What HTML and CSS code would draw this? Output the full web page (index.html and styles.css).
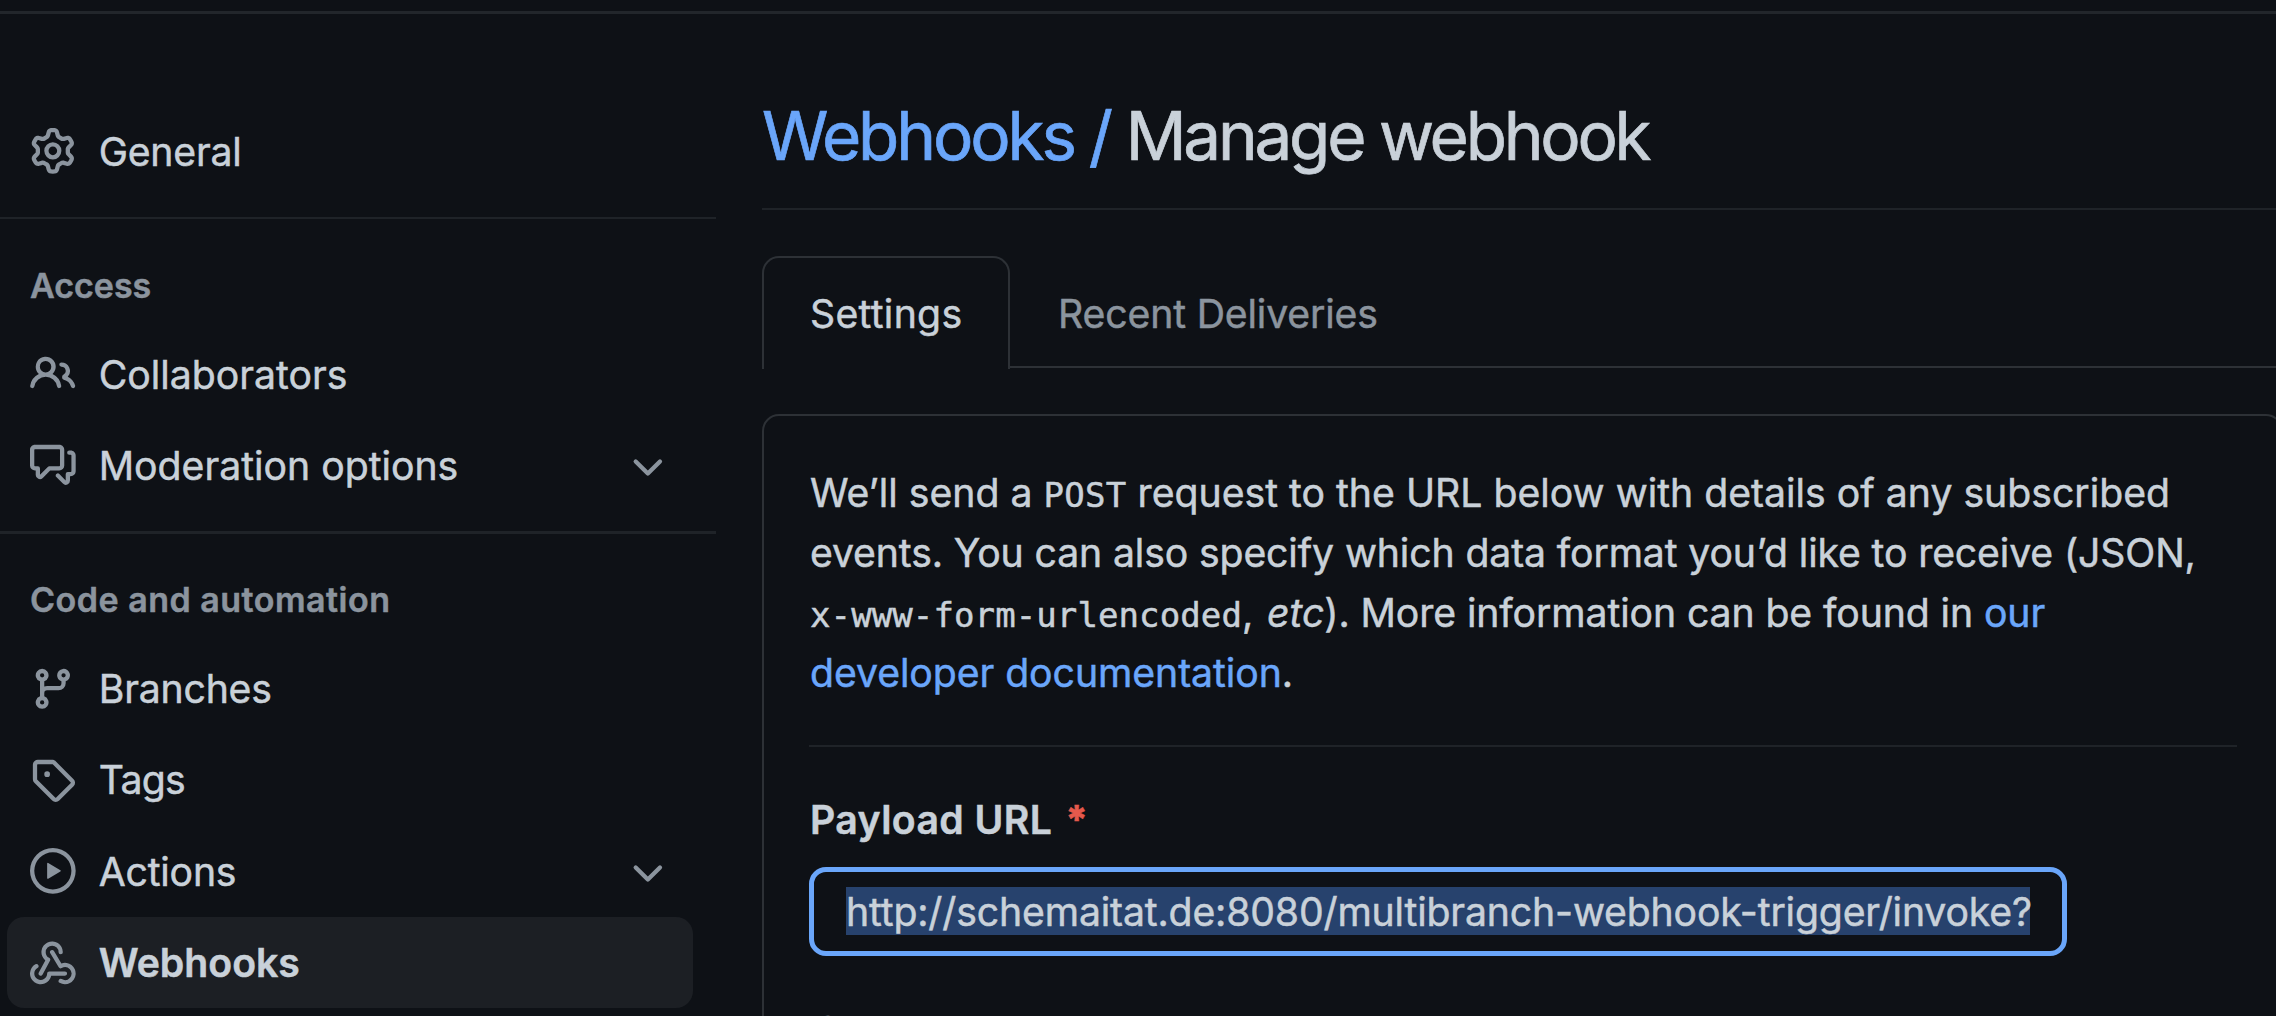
FILE: index.html
```html
<!DOCTYPE html>
<html lang="en">
<head>
<meta charset="utf-8">
<title>Manage webhook</title>
<link rel="stylesheet" href="styles.css">
</head>
<body>
<div class="page">
  <nav class="sidebar">
    <a class="item general"><svg class="icon" viewBox="0 0 16 16"><path d="M8 0a8.2 8.2 0 0 1 .701.031C9.444.095 9.99.645 10.16 1.29l.288 1.107c.018.066.079.158.212.224.231.114.454.243.668.386.123.082.233.09.299.071l1.103-.303c.644-.176 1.392.021 1.82.63.27.385.506.792.704 1.218.315.675.111 1.422-.364 1.891l-.814.806c-.049.048-.098.147-.088.294.016.257.016.515 0 .772-.01.147.038.246.088.294l.814.806c.475.469.679 1.216.364 1.891a7.977 7.977 0 0 1-.704 1.217c-.428.61-1.176.807-1.82.63l-1.102-.302c-.067-.019-.177-.011-.3.071a5.909 5.909 0 0 1-.668.386c-.133.066-.194.158-.211.224l-.29 1.106c-.168.646-.715 1.196-1.458 1.26a8.006 8.006 0 0 1-1.402 0c-.743-.064-1.289-.614-1.458-1.26l-.289-1.106c-.018-.066-.079-.158-.212-.224a5.738 5.738 0 0 1-.668-.386c-.123-.082-.233-.09-.299-.071l-1.103.303c-.644.176-1.392-.021-1.82-.63a8.12 8.12 0 0 1-.704-1.218c-.315-.675-.111-1.422.363-1.891l.815-.806c.05-.048.098-.147.088-.294a6.214 6.214 0 0 1 0-.772c.01-.147-.038-.246-.088-.294l-.815-.806C.635 6.045.431 5.298.746 4.623a7.92 7.92 0 0 1 .704-1.217c.428-.61 1.176-.807 1.82-.63l1.102.302c.067.019.177.011.3-.071.214-.143.437-.272.668-.386.133-.066.194-.158.211-.224l.29-1.106C6.009.645 6.556.095 7.299.03 7.53.01 7.764 0 8 0Zm-.571 1.525c-.036.003-.108.036-.137.146l-.289 1.105c-.147.561-.549.967-.998 1.189-.173.086-.34.183-.5.29-.417.278-.97.423-1.529.27l-1.103-.303c-.109-.03-.175.016-.195.045-.22.312-.412.644-.573.99-.014.031-.021.11.059.19l.815.806c.411.406.562.957.53 1.456a4.709 4.709 0 0 0 0 .582c.032.499-.119 1.05-.53 1.456l-.815.806c-.081.08-.073.159-.059.19.162.346.353.677.573.989.02.03.085.076.195.046l1.102-.303c.56-.153 1.113-.008 1.53.27.161.107.328.204.501.29.447.222.85.629.997 1.189l.289 1.105c.029.109.101.143.137.146a6.6 6.6 0 0 0 1.142 0c.036-.003.108-.036.137-.146l.289-1.105c.147-.561.549-.967.998-1.189.173-.086.34-.183.5-.29.417-.278.97-.423 1.529-.27l1.103.303c.109.029.175-.016.195-.045.22-.313.411-.644.573-.99.014-.031.021-.11-.059-.19l-.815-.806c-.411-.406-.562-.957-.53-1.456a4.709 4.709 0 0 0 0-.582c-.032-.499.119-1.05.53-1.456l.815-.806c.081-.08.073-.159.059-.19a6.464 6.464 0 0 0-.573-.989c-.02-.03-.085-.076-.195-.046l-1.102.303c-.56.153-1.113.008-1.53-.27a4.44 4.44 0 0 0-.501-.29c-.447-.222-.85-.629-.997-1.189l-.289-1.105c-.029-.11-.101-.143-.137-.146a6.6 6.6 0 0 0-1.142 0ZM11 8a3 3 0 1 1-6 0 3 3 0 0 1 6 0ZM9.5 8a1.5 1.5 0 1 0-3.001.001A1.5 1.5 0 0 0 9.5 8Z"/></svg><span>General</span></a>

    <section class="group group-access">
      <h2>Access</h2>
      <a class="item collaborators"><svg class="icon" viewBox="0 0 16 16"><path d="M2 5.5a3.5 3.5 0 1 1 5.898 2.549 5.508 5.508 0 0 1 3.034 4.084.75.75 0 1 1-1.482.235 4 4 0 0 0-7.9 0 .75.75 0 0 1-1.482-.236A5.507 5.507 0 0 1 3.102 8.05 3.493 3.493 0 0 1 2 5.5ZM11 4a3.001 3.001 0 0 1 2.22 5.018 5.01 5.01 0 0 1 2.56 3.012.749.749 0 0 1-.885.954.752.752 0 0 1-.549-.514 3.507 3.507 0 0 0-2.522-2.372.75.75 0 0 1-.574-.73v-.352a.75.75 0 0 1 .416-.672A1.5 1.5 0 0 0 11 5.5.75.75 0 0 1 11 4Zm-5.5-.5a2 2 0 1 0-.001 3.999A2 2 0 0 0 5.5 3.5Z"/></svg><span>Collaborators</span></a>
      <a class="item moderation"><svg class="icon" viewBox="0 0 16 16"><path d="M1.75 1h8.5c.966 0 1.75.784 1.75 1.75v5.5A1.75 1.75 0 0 1 10.25 10H7.061l-2.574 2.573A1.458 1.458 0 0 1 2 11.543V10h-.25A1.75 1.75 0 0 1 0 8.25v-5.5C0 1.784.784 1 1.75 1ZM1.5 2.75v5.5c0 .138.112.25.25.25h1a.75.75 0 0 1 .75.75v2.19l2.72-2.72a.749.749 0 0 1 .53-.22h3.5a.25.25 0 0 0 .25-.25v-5.5a.25.25 0 0 0-.25-.25h-8.5a.25.25 0 0 0-.25.25Zm13 2a.25.25 0 0 0-.25-.25h-.5a.75.75 0 0 1 0-1.5h.5c.966 0 1.75.784 1.75 1.75v5.5A1.75 1.75 0 0 1 14.25 12H14v1.543a1.458 1.458 0 0 1-2.487 1.03L9.22 12.28a.749.749 0 0 1 .326-1.275.749.749 0 0 1 .734.215l2.22 2.22v-2.19a.75.75 0 0 1 .75-.75h1a.25.25 0 0 0 .25-.25Z"/></svg><span>Moderation options</span><svg class="icon chevron" viewBox="0 0 16 16"><path d="M12.78 5.22a.749.749 0 0 1 0 1.06l-4.25 4.25a.749.749 0 0 1-1.06 0L3.22 6.28a.749.749 0 1 1 1.06-1.06L8 8.939l3.72-3.719a.749.749 0 0 1 1.06 0Z"/></svg></a>
    </section>

    <section class="group group-code">
      <h2>Code and automation</h2>
      <a class="item branches"><svg class="icon" viewBox="0 0 16 16"><path d="M9.5 3.25a2.25 2.25 0 1 1 3 2.122V6A2.5 2.5 0 0 1 10 8.5H6a1 1 0 0 0-1 1v1.128a2.251 2.251 0 1 1-1.5 0V5.372a2.25 2.25 0 1 1 1.5 0v1.836A2.493 2.493 0 0 1 6 7h4a1 1 0 0 0 1-1v-.628A2.25 2.25 0 0 1 9.5 3.25Zm-6 0a.75.75 0 1 0 1.5 0 .75.75 0 0 0-1.5 0Zm8.25-.75a.75.75 0 1 0 0 1.5.75.75 0 0 0 0-1.5ZM4.25 12a.75.75 0 1 0 0 1.5.75.75 0 0 0 0-1.5Z"/></svg><span>Branches</span></a>
      <a class="item tags"><svg class="icon" viewBox="0 0 16 16"><path d="M1 7.775V2.75C1 1.784 1.784 1 2.75 1h5.025c.464 0 .91.184 1.238.513l6.25 6.25a1.75 1.75 0 0 1 0 2.474l-5.026 5.026a1.75 1.75 0 0 1-2.474 0l-6.25-6.25A1.752 1.752 0 0 1 1 7.775Zm1.5 0c0 .066.026.13.073.177l6.25 6.25a.25.25 0 0 0 .354 0l5.025-5.025a.25.25 0 0 0 0-.354l-6.25-6.25a.25.25 0 0 0-.177-.073H2.75a.25.25 0 0 0-.25.25ZM6 5a1 1 0 1 1 0 2 1 1 0 0 1 0-2Z"/></svg><span>Tags</span></a>
      <a class="item actions"><svg class="icon" viewBox="0 0 16 16"><path d="M8 0a8 8 0 1 1 0 16A8 8 0 0 1 8 0ZM1.5 8a6.5 6.5 0 1 0 13 0 6.5 6.5 0 0 0-13 0Zm4.879-2.773 4.264 2.559a.25.25 0 0 1 0 .428l-4.264 2.559A.25.25 0 0 1 6 10.559V5.442a.25.25 0 0 1 .379-.215Z"/></svg><span>Actions</span><svg class="icon chevron" viewBox="0 0 16 16"><path d="M12.78 5.22a.749.749 0 0 1 0 1.06l-4.25 4.25a.749.749 0 0 1-1.06 0L3.22 6.28a.749.749 0 1 1 1.06-1.06L8 8.939l3.72-3.719a.749.749 0 0 1 1.06 0Z"/></svg></a>
      <a class="item webhooks selected"><svg class="icon" viewBox="0 0 16 16"><path d="M5.5 4.25a2.25 2.25 0 0 1 4.5 0 .75.75 0 0 0 1.5 0 3.75 3.75 0 1 0-6.14 2.889l-2.272 4.258a.75.75 0 0 0 1.324.706L7 7.25a.75.75 0 0 0-.309-1.015A2.25 2.25 0 0 1 5.5 4.25Z"/><path d="M7.364 3.607a.75.75 0 0 1 1.03.257l2.608 4.349a3.75 3.75 0 1 1-.628 6.785.75.75 0 0 1 .752-1.299 2.25 2.25 0 1 0-.033-3.88.75.75 0 0 1-1.03-.256L7.107 4.636a.75.75 0 0 1 .257-1.03Z"/><path d="M2.9 8.776A.75.75 0 0 1 2.625 9.8 2.25 2.25 0 1 0 6 11.75a.75.75 0 0 1 .75-.751h5.5a.75.75 0 0 1 0 1.5H7.425a3.751 3.751 0 1 1-5.55-3.998.75.75 0 0 1 1.024.274Z"/></svg><span>Webhooks</span></a>
    </section>
  </nav>

  <main class="content">
    <h1><a class="link crumb">Webhooks /</a> <span class="current">Manage webhook</span></h1>
    <div class="tabs">
      <a class="tab active"><span>Settings</span></a>
      <a class="tab"><span class="recent">Recent Deliveries</span></a>
    </div>
    <div class="panel">
      <p class="intro">
        <span class="line l1">We’ll send a <code>POST</code> request to the URL below with details of any subscribed</span>
        <span class="line l2">events. You can also specify which data format you’d like to receive (JSON,</span>
        <span class="line l3"><code>x-www-form-urlencoded</code>, <em>etc</em>). More information can be found in <a class="link">our</a></span>
        <span class="line l4"><a class="link">developer documentation</a>.</span>
      </p>
      <div class="field">
        <label><span class="payload">Payload URL</span><span class="required">*</span></label>
        <div class="input"><span class="selection">http://schemaitat.de:8080/multibranch-webhook-trigger/invoke?</span></div>
      </div>
      <div class="field next"><label>Content type</label></div>
    </div>
  </main>
</div>
</body>
</html>
```
FILE: styles.css
```css
* { box-sizing: border-box; }

body {
  margin: 0;
  height: 1016px;
  overflow: hidden;
  background: #0e1116;
  color: #c9d1d9;
  font: 400 39.2px/60px Inter, "Liberation Sans", sans-serif;
  -webkit-text-stroke: 0.5px currentColor;
  white-space: nowrap;
}

.page {
  display: flex;
  height: 1016px;
  margin-top: 11px;
  border-top: 3px solid #22262b;
}

h1, h2, p { margin: 0; }

/* Sidebar */
.sidebar {
  flex: none;
  width: 716px;
  margin-right: 46px;
  padding-top: 91.5px;
}

.item {
  display: flex;
  align-items: center;
  height: 91.4px;
  margin: 0 23px 0 7px;
  padding: 0 22px 0 23px;
  border-radius: 17px;
}

.item span { padding-top: 2px; margin-left: 23px; }

.group-code .item span { padding-top: 1px; }

.icon {
  flex: none;
  width: 45.7px;
  height: 45.7px;
  fill: #8b949e;
}

.chevron { margin: 5px 0 0 auto; }

.general { margin-bottom: 20px; letter-spacing: -0.2px; }

.branches, .actions { letter-spacing: -0.2px; }

.tags { letter-spacing: -0.7px; }

.group { border-top: 2px solid #1f2328; }

.group-code { margin-top: 20px; border-top-width: 3px; }

.group h2 {
  height: 109px;
  padding: 37px 0 0 30px;
  color: #8b949e;
  font-size: 34px;
  font-weight: 600;
  line-height: 60px;
}

.group-code h2 {
  padding-top: 36px;
  letter-spacing: 0.5px;
}

.selected {
  background: #1c1f24;
  font-weight: 600;
}

/* Main column */
.content { flex: 1; min-width: 0; }

.link { color: #6aa6fa; }

h1 {
  height: 196px;
  padding-top: 72px;
  border-bottom: 2px solid #1f2328;
  font-size: 67.4px;
  font-weight: 400;
  line-height: 100px;
  letter-spacing: -3.25px;
  -webkit-text-stroke-width: 0.7px;
}

.crumb { letter-spacing: -3.1px; word-spacing: -1px; }

.tabs {
  display: flex;
  height: 112px;
  margin-top: 46px;
  border-bottom: 2px solid #2d3136;
}

.tab {
  height: 113px;
  padding: 28px 48px 0;
  color: #8b949e;
  letter-spacing: -0.15px;
}

.tab.active {
  width: 248px;
  background: #0e1116;
  border: 2px solid #2d3136;
  border-bottom: 0;
  border-radius: 17px 17px 0 0;
  padding: 26px 46px 0;
  color: #c9d1d9;
  letter-spacing: 0.3px;
}

.panel {
  width: 1521px;
  height: 640px;
  margin-top: 46px;
  padding: 46px 44px 0 45px;
  border: 2px solid #2d3136;
  border-radius: 17px;
}

.intro {
  height: 285px;
  padding: 1px 0 0 1px;
  border-bottom: 2px solid #1f2328;
}

.line { display: block; height: 60px; }

.l2 { letter-spacing: -0.13px; }
.l3 { letter-spacing: -0.1px; }
.l4 { letter-spacing: -0.06px; }

code {
  font-family: "DejaVu Sans Mono", monospace;
  font-size: 34px;
  line-height: 1;
  letter-spacing: 0.1px;
}

.l1 code { letter-spacing: 0.3px; }

em { margin-left: 3px; }

.field { padding-top: 43px; }

.field label {
  display: flex;
  gap: 13px;
  padding-left: 1px;
  font-weight: 600;
  letter-spacing: 0.4px;
}

.next { padding-top: 45px; }

.next label { padding-left: 4px; }

.required {
  color: #e5594c;
  font-weight: 800;
}

.input {
  width: 1258px;
  height: 89px;
  margin-top: 17px;
  padding: 15px 32px;
  border: 5px solid #6aa6fa;
  border-radius: 17px;
}

.selection {
  display: block;
  width: 1184px;
  height: 48px;
  background: #27426d;
  line-height: 49px;
  letter-spacing: -0.16px;
}
```
